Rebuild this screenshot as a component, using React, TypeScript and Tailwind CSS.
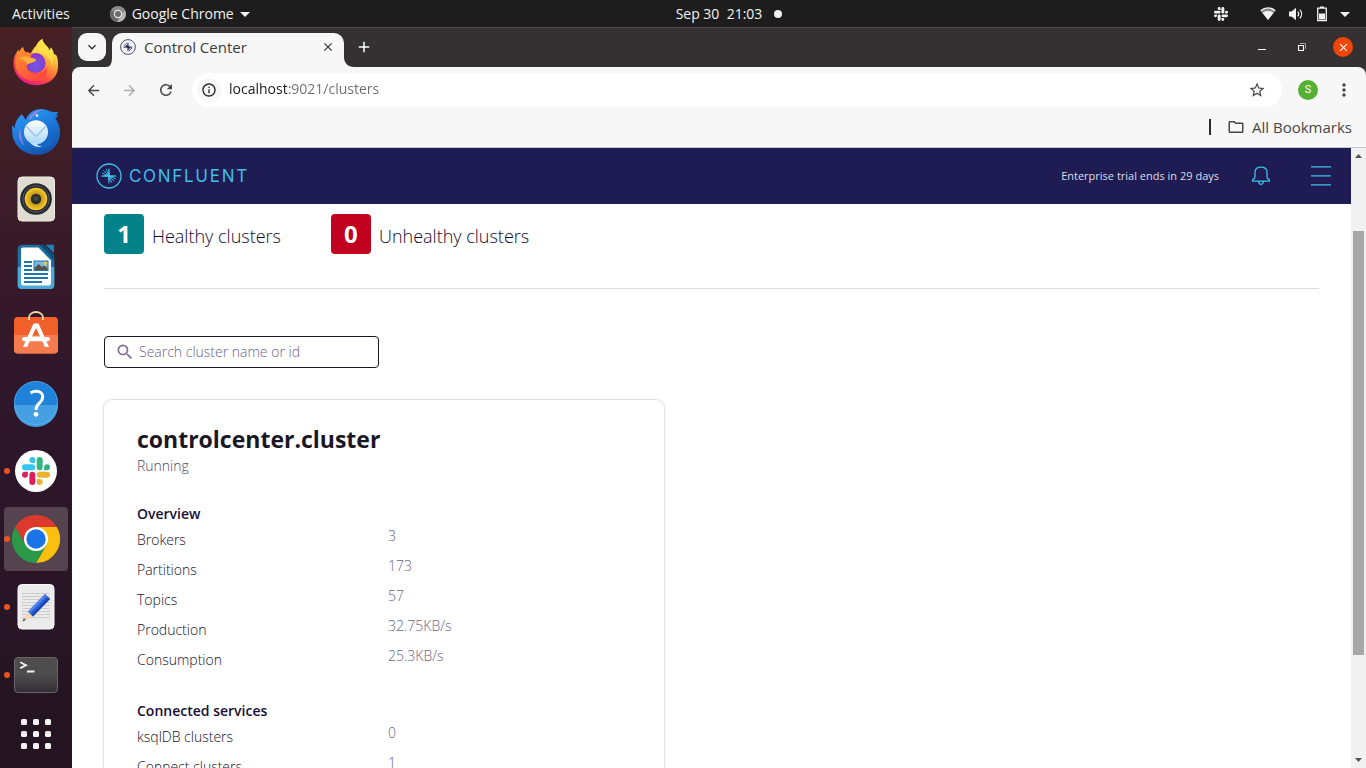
import type { ReactNode } from "react";
import {
  MdArrowBack,
  MdArrowForward,
  MdClose,
  MdInfoOutline,
  MdKeyboardArrowDown,
  MdMoreVert,
  MdRefresh,
  MdSearch,
  MdStarBorder,
  MdAdd,
  MdOutlineFolder,
} from "react-icons/md";

const SLACK_PATHS: { fill: string; d: string }[] = [
  {
    fill: "#e01e5a",
    d: "M5.042 15.165a2.528 2.528 0 0 1-2.52 2.523A2.528 2.528 0 0 1 0 15.165a2.527 2.527 0 0 1 2.522-2.52h2.52v2.52zM6.313 15.165a2.527 2.527 0 0 1 2.521-2.52 2.527 2.527 0 0 1 2.521 2.52v6.313A2.528 2.528 0 0 1 8.834 24a2.528 2.528 0 0 1-2.521-2.522v-6.313z",
  },
  {
    fill: "#36c5f0",
    d: "M8.834 5.042a2.528 2.528 0 0 1-2.521-2.52A2.528 2.528 0 0 1 8.834 0a2.528 2.528 0 0 1 2.521 2.522v2.52H8.834zM8.834 6.313a2.528 2.528 0 0 1 2.521 2.521 2.528 2.528 0 0 1-2.521 2.521H2.522A2.528 2.528 0 0 1 0 8.834a2.528 2.528 0 0 1 2.522-2.521h6.312z",
  },
  {
    fill: "#2eb67d",
    d: "M18.956 8.834a2.528 2.528 0 0 1 2.522-2.521A2.528 2.528 0 0 1 24 8.834a2.528 2.528 0 0 1-2.522 2.521h-2.522V8.834zM17.688 8.834a2.528 2.528 0 0 1-2.523 2.521 2.527 2.527 0 0 1-2.52-2.521V2.522A2.527 2.527 0 0 1 15.165 0a2.528 2.528 0 0 1 2.523 2.522v6.312z",
  },
  {
    fill: "#ecb22e",
    d: "M15.165 18.956a2.528 2.528 0 0 1 2.523 2.522A2.528 2.528 0 0 1 15.165 24a2.527 2.527 0 0 1-2.52-2.522v-2.522h2.52zM15.165 17.688a2.527 2.527 0 0 1-2.52-2.523 2.526 2.526 0 0 1 2.52-2.52h6.313A2.527 2.527 0 0 1 24 15.165a2.528 2.528 0 0 1-2.522 2.523h-6.313z",
  },
];

const APP_ICON = "size-12";

function FirefoxIcon() {
  return (
    <svg viewBox="0 0 48 48" className={APP_ICON} aria-hidden="true">
      <defs>
        <linearGradient id="ff-body" x1="0.8" y1="0.05" x2="0.3" y2="1">
          <stop offset="0.1" stopColor="#fff44f" />
          <stop offset="0.4" stopColor="#ffa436" />
          <stop offset="0.7" stopColor="#ff4f3e" />
          <stop offset="1" stopColor="#e31587" />
        </linearGradient>
        <radialGradient id="ff-globe" cx="0.5" cy="0.6" r="0.6">
          <stop offset="0" stopColor="#6a5be8" />
          <stop offset="1" stopColor="#9035c4" />
        </radialGradient>
        <linearGradient id="ff-fox" x1="0" y1="0" x2="0.6" y2="1">
          <stop offset="0" stopColor="#ff9a2b" />
          <stop offset="1" stopColor="#ff4a3f" />
        </linearGradient>
      </defs>
      <path
        fill="url(#ff-body)"
        d="M30.5 0c.2 3.600 3 5.700 5.600 8.500l1 3.300c.9-.7 1.500-2 1.500-3.500 2 2 3 4.200 3.200 6.600 1 .2 1.900.7 2.700 1.500 1.300 3 1.800 6.500 1.500 10.700C46.200 39 36.500 46.200 24.500 46.200 11.500 46.200 1.500 37 1.500 24c0-6 2.500-10 5.100-13.500l.5 3c.8-2.300 2-4.200 3.900-5.600.2 2.100 1 3.800 2.300 5.100 2 .1 3.800.6 5.500 1.500 1.200-3 2.900-5.500 5.200-7.500C25.200 4.300 27.500 1.500 30.500 0z"
      />
      <circle cx="23.600" cy="24" r="10" fill="url(#ff-globe)" />
      <path
        fill="url(#ff-fox)"
        d="M11 7.900c.2 2.100 1 3.800 2.300 5.100 2.500.1 4.700.8 6.500 2.300l-1.500 3.100c1.800.5 4 1 5.800 2.400-.7 2-2.600 2.500-4.600 3-2.400.6-4.700.9-4.700 4 0 4.500 4.700 7.200 9.500 7 5.200-.2 9-3.500 10.300-7.300C37 34.500 32 42 23 42 11 42 3.500 34 3.500 25c0-4 1-7.500 3.600-11.500.8-2.300 2-4.200 3.900-5.600z"
      />
      <path
        fill="#ffb13b"
        d="M7 19.500c4-2.600 8.600-2.600 11.300-1.100 1.800.5 4 1 5.800 2.400-.7 2-2.600 2.500-4.600 3-2 .6-3.500.9-4.300 2-1-3.500-4-5.600-8.200-6.300z"
      />
      <path
        fill="#ffe04a"
        opacity="0.75"
        d="M30.500 0c.2 3.600 3 5.700 5.600 8.500 4.500 6 6 12 4.400 19-1.500-7-5-10.500-9-12.500-3-1.700-7-2-11.500-1 1.500-3 2.400-4.500 4-6.500C25.200 4.300 27.500 1.500 30.500 0z"
      />
    </svg>
  );
}

function ThunderbirdIcon() {
  return (
    <svg viewBox="0 0 48 48" className={APP_ICON} aria-hidden="true">
      <defs>
        <linearGradient id="tb-body" x1="0.2" y1="0" x2="0.7" y2="1">
          <stop offset="0" stopColor="#2f9af5" />
          <stop offset="0.5" stopColor="#1b77d8" />
          <stop offset="1" stopColor="#1450a8" />
        </linearGradient>
        <linearGradient id="tb-mail" x1="0" y1="0" x2="0" y2="1">
          <stop offset="0" stopColor="#ffffff" />
          <stop offset="1" stopColor="#a9d6fb" />
        </linearGradient>
      </defs>
      <path
        fill="url(#tb-body)"
        d="M9.700 7.300c1.500 1.600 2.800 3.300 4 5.700 2-6.500 8-11 15.500-11 3.300 0 6.300.9 8.900 2.500 2.500.6 5.200.6 8.300.2-.6 1.600-1.500 2.700-2.700 3.300l2.500.4c-.8 1.500-1.700 2.300-3 2.800 3.200 4 4.800 8.800 4.800 14C48 38.500 38 47.800 25 47.800 11 47.800.6 38 .2 24.500L0 18.300c.9.800 1.700 1.700 2.300 2.900.7-5.500 3.200-10 7.400-13.900z"
      />
      <path
        fill="#8f86e8"
        d="M16.500 12.500C19 6 25 2.300 31 3c-4 1.200-6.500 2.500-7.800 4.900-1.300.2-2.200.8-2.600 2-.6 1.700-2.200 2.600-4.100 2.600z"
      />
      <path fill="#7e7fe0" d="M8.500 21c-3.500 6-2 13 4 17.500-3-6-4-11.500-4-17.500z" />
      <path fill="#1567c4" d="M31 36c6-1.500 9-5.500 9.500-11.500C43.500 32 40 40 30 42c-5 .8-9-.8-12-3z" />
      <circle cx="24" cy="25.300" r="12" fill="url(#tb-mail)" />
      <path fill="#c3dffc" d="M24 36c1.500 2 3.500 3.200 6 3.800-4.500 1-9-.4-12-4z" />
      <path fill="none" stroke="#9cc3ea" strokeWidth="1.500" d="M14.500 19.500l8 8.700c.9 1 2.100 1 3 0l8-8.700" />
      <circle cx="25" cy="8.600" r="1.300" fill="#e6f3ff" />
    </svg>
  );
}

function RhythmboxIcon() {
  return (
    <svg viewBox="0 0 48 48" className={APP_ICON} aria-hidden="true">
      <defs>
        <radialGradient id="rb-cone">
          <stop offset="0.3" stopColor="#b5860d" />
          <stop offset="1" stopColor="#f9cd2e" />
        </radialGradient>
      </defs>
      <rect x="6" y="2" width="36.500" height="44" rx="4" fill="#dfdbd1" stroke="#f1eee8" />
      <circle cx="24" cy="24" r="15.800" fill="#26262e" />
      <circle cx="24" cy="24" r="13.300" fill="none" stroke="#565766" strokeWidth="1" />
      <circle cx="24" cy="24" r="11.300" fill="url(#rb-cone)" />
      <circle cx="24" cy="24" r="5.200" fill="#2c2c2c" />
      <circle cx="24" cy="23.500" r="2.500" fill="#444" />
    </svg>
  );
}

function WriterIcon() {
  return (
    <svg viewBox="0 0 48 48" className={APP_ICON} aria-hidden="true">
      <path fill="#1c6f9f" d="M10 1.700h18L42.300 16v26a4 4 0 0 1-4 4H9.700a4 4 0 0 1-4-4V6a4.300 4.300 0 0 1 4.300-4.300z" />
      <path fill="#4aa9d8" d="M5.700 24h36.600v18a4 4 0 0 1-4 4H9.700a4 4 0 0 1-4-4z" />
      <path fill="#0d4f79" d="M28 1.700h4L42.300 12v6z" />
      <path fill="#1e81b4" d="M33.500 1.700H42v8.500z" />
      <path fill="#fff" d="M11 4.500h15.500L39 17.500V40a2.500 2.500 0 0 1-2.500 2.500h-25A2.500 2.500 0 0 1 9 40V6.500a2 2 0 0 1 2-2z" />
      <path
        stroke="#1d77ab"
        strokeWidth="1.900"
        d="M12 19h8M12 23h8M12 27h8M12 31h24M12 35h24M12 39h18"
      />
      <rect x="22" y="18" width="14" height="9.500" fill="#7db9e6" stroke="#1d77ab" />
      <path fill="#55534c" d="M22.500 27v-2l4-4 3.500 3 2-1.500 3.500 2.500v2z" />
      <circle cx="33.500" cy="20.500" r="1.800" fill="#f6c94b" />
    </svg>
  );
}

function SoftwareIcon() {
  return (
    <svg viewBox="0 0 48 48" className={APP_ICON} aria-hidden="true">
      <rect x="2" y="6" width="44" height="36.500" rx="4" fill="#f1602b" />
      <path fill="#f47c4f" d="M2 24h44v14.500a4 4 0 0 1-4 4H6a4 4 0 0 1-4-4z" />
      <path fill="none" stroke="#f3dba9" strokeWidth="1.800" d="M17 9V6.500a7 5.500 0 0 1 14 0V9" />
      <path fill="#fff" d="M21.500 12.500h5L37 36h-4.200l-3-7h-11.600l-3 7H11z M24 17l-4 8.500h8z" fillRule="evenodd" />
      <rect x="10" y="26" width="28" height="4.200" rx="2.100" fill="#fff" />
    </svg>
  );
}

function HelpIcon() {
  return (
    <svg viewBox="0 0 48 48" className={APP_ICON} aria-hidden="true">
      <circle cx="24" cy="24" r="22" fill="#1e83d8" />
      <path fill="#45a0e3" d="M2 26h44a22 22 0 0 1-44 0z" />
      <circle cx="24" cy="24" r="21.500" fill="none" stroke="#60b5ee" strokeOpacity="0.6" />
      <path
        fill="none"
        stroke="#fff"
        strokeWidth="3"
        d="M18.500 13.800c2-1 3.800-1.500 5.800-1.500 4 0 6.400 2.200 6.400 5.600 0 3-1.600 4.500-3.700 6.500-2 1.900-3 3.400-3 6.600"
      />
      <circle cx="24" cy="35.300" r="2.400" fill="#fff" />
    </svg>
  );
}

function SlackIcon() {
  return (
    <svg viewBox="0 0 48 48" className={APP_ICON} aria-hidden="true">
      <circle cx="24" cy="24" r="21" fill="#fff" />
      <g transform="translate(10 10) scale(1.167)">
        {SLACK_PATHS.map((p) => (
          <path key={p.fill} fill={p.fill} d={p.d} />
        ))}
      </g>
    </svg>
  );
}

function ChromeIcon() {
  return (
    <svg viewBox="0 0 48 48" className={APP_ICON} aria-hidden="true">
      <path fill="#dc3a2e" d="M3.200 12A24 24 0 0 1 44.800 12L24 12 13.600 30z" />
      <path fill="#fbc00f" d="M44.800 12A24 24 0 0 1 24 48L34.400 30 24 12z" />
      <path fill="#2a9a49" d="M24 48A24 24 0 0 1 3.200 12L13.600 30 34.400 30z" />
      <circle cx="24" cy="24" r="12" fill="#fff" />
      <circle cx="24" cy="24" r="9.700" fill="#1b73e8" />
    </svg>
  );
}

function EditorIcon() {
  return (
    <svg viewBox="0 0 48 48" className={APP_ICON} aria-hidden="true">
      <rect x="6" y="1.500" width="36" height="44.500" rx="4" fill="#ebebeb" stroke="#fafafa" />
      <path
        stroke="#cccccc"
        d="M10 10.500h28M10 13.500h28M10 16.500h28M10 19.500h28M10 22.500h28M10 25.500h28M10 28.500h28M10 31.500h28M10 34.500h28"
      />
      <path fill="#f6d4b5" d="M16 28.500l-5.500 9.500 10.500-4.500z" />
      <path fill="#4a4a4a" d="M12 35.300L10.300 38.500l3.500-1.500z" />
      <path fill="#2c5fd8" d="M16 28.500L33 11l5 5-17 17.500z" />
      <path fill="#4f83ee" d="M16 28.500L33 11l1.800 1.800-17 17.500z" />
      <path fill="#1d46b0" d="M19.300 31.800l17-17.500L38 16 21 33.500z" />
    </svg>
  );
}

function TerminalIcon() {
  return (
    <svg viewBox="0 0 48 48" className={APP_ICON} aria-hidden="true">
      <defs>
        <linearGradient id="term-bg" x1="0" y1="0" x2="0" y2="1">
          <stop offset="0.500" stopColor="#4d4d4d" />
          <stop offset="1" stopColor="#332c33" />
        </linearGradient>
      </defs>
      <rect x="2.500" y="6.500" width="43" height="35" rx="3.500" fill="url(#term-bg)" stroke="#68646a" />
      <path fill="none" stroke="#f5f5f5" strokeWidth="1.800" d="M8.300 11.300l5.700 2.900-5.700 2.900M15 20.500h7.500" />
    </svg>
  );
}

type DockApp = { name: string; icon: ReactNode; running?: boolean; active?: boolean };

const DOCK_APPS: DockApp[] = [
  { name: "Firefox", icon: <FirefoxIcon /> },
  { name: "Thunderbird", icon: <ThunderbirdIcon /> },
  { name: "Rhythmbox", icon: <RhythmboxIcon /> },
  { name: "LibreOffice Writer", icon: <WriterIcon /> },
  { name: "Software", icon: <SoftwareIcon /> },
  { name: "Help", icon: <HelpIcon /> },
  { name: "Slack", icon: <SlackIcon />, running: true },
  { name: "Chrome", icon: <ChromeIcon />, running: true, active: true },
  { name: "Text Editor", icon: <EditorIcon />, running: true },
  { name: "Terminal", icon: <TerminalIcon />, running: true },
];

function Dock() {
  return (
    <nav
      aria-label="Dock"
      className="flex w-[72px] shrink-0 flex-col overflow-hidden bg-linear-to-b from-[#472124] via-[#2f162b] to-[#231420] pt-0.5"
    >
      {DOCK_APPS.map((app) => (
        <div key={app.name} className="flex h-[68px] shrink-0 items-center justify-center">
          <button
            type="button"
            aria-label={app.name}
            className={
              app.active
                ? "relative flex size-16 items-center justify-center rounded bg-[#55434f]"
                : "relative flex size-16 items-center justify-center rounded"
            }
          >
            {app.icon}
            {app.running && <span className="absolute left-0 size-1.5 rounded-full bg-[#e95420]" />}
          </button>
        </div>
      ))}
      <button type="button" aria-label="Show Applications" className="flex h-[50px] shrink-0 items-center justify-center">
        <svg viewBox="0 0 30 30" className="size-[30px]" fill="#f4f2f0" aria-hidden="true">
          {[0, 12, 24].map((y) => [0, 12, 24].map((x) => <rect key={`${x}-${y}`} x={x} y={y} width="6" height="6" rx="1.500" />))}
        </svg>
      </button>
    </nav>
  );
}

function TopBar() {
  return (
    <header className="grid h-7 shrink-0 grid-cols-[1fr_auto_1fr] items-center bg-[#1d1d1d] px-3 text-sm text-[#f2f2f2]">
      <div className="flex items-center gap-10">
        <button type="button">Activities</button>
        <button type="button" className="flex items-center gap-1.5">
          <svg viewBox="0 0 16 16" className="size-4" aria-hidden="true">
            <circle cx="8" cy="8" r="8" fill="#8b8b8b" />
            <path fill="#6a6a6a" d="M1 4a8 8 0 0 0 6 12l3.500-6z" />
            <path fill="#b5b5b5" d="M15 4.500A8 8 0 0 1 7.500 16l4-7z" />
            <circle cx="8" cy="8" r="4.200" fill="#e8e8e8" />
            <circle cx="8" cy="8" r="3" fill="#6a6a6a" />
          </svg>
          <span>Google Chrome</span>
          <svg viewBox="0 0 10 5" className="w-2.5" fill="#f2f2f2" aria-hidden="true">
            <path d="M0 0h10L5 5z" />
          </svg>
        </button>
      </div>
      <button type="button" className="flex items-center gap-3 pl-23">
        <span className="whitespace-pre">Sep 30  21:03</span>
        <span className="size-2 rounded-full bg-[#f2f2f2]" />
      </button>
      <div className="flex items-center justify-end gap-3 pr-1">
        <svg viewBox="0 0 24 24" className="mr-5 size-3.5" fill="#f2f2f2" aria-label="Slack">
          {SLACK_PATHS.map((p) => (
            <path key={p.fill} d={p.d} />
          ))}
        </svg>
        <svg viewBox="0 0 16 14" className="w-4" aria-label="Wi-Fi">
          <path fill="#8a8a8a" d="M8 1C4.800 1 2.200 2 .3 3.500L8 13l7.700-9.500C13.800 2 11.200 1 8 1z" />
          <path fill="none" stroke="#f2f2f2" strokeWidth="1.400" d="M.8 3.700C5-.1 11-.1 15.200 3.700" />
          <path fill="#f2f2f2" d="M8 4c-2.200 0-4 .6-5.500 1.800L8 13l5.500-7.200C12 4.600 10.200 4 8 4z" />
        </svg>
        <svg viewBox="0 0 16 14" className="w-4" aria-label="Volume">
          <path fill="#f2f2f2" d="M1 4.500h2.500L8 .8v12.400L3.500 9.500H1z" />
          <path fill="none" stroke="#f2f2f2" strokeWidth="1.200" d="M9.800 4.600c1.200 1.500 1.200 3.300 0 4.800M11.800 2.600c2.400 2.600 2.400 6.200 0 8.800" />
        </svg>
        <svg viewBox="0 0 12 16" className="w-3" aria-label="Battery">
          <path fill="none" stroke="#f2f2f2" strokeWidth="1.300" d="M4 1.200h4M1.700 2.200h8.600v12.500H1.700z" />
          <path fill="#f2f2f2" d="M3 7.500h6v6H3z" />
        </svg>
        <svg viewBox="0 0 10 5" className="w-2.5" fill="#f2f2f2" aria-hidden="true">
          <path d="M0 0h10L5 5z" />
        </svg>
      </div>
    </header>
  );
}

function ConfluentMark({ className }: { className: string }) {
  return (
    <svg viewBox="0 0 26 26" className={className} fill="none" stroke="currentColor" aria-hidden="true">
      <circle cx="13" cy="13" r="12" strokeWidth="1.300" />
      <path
        strokeWidth="0.900"
        d="M13 13V5.500M13 13L10.200 5.800M13 13L7.300 7.500M13 13L5.800 10M13 13H5.200M13 13v7.500M13 13l3 7M13 13l5.300 5.300M13 13l7 3M13 13h7.500"
      />
      <path fill="currentColor" stroke="none" d="M5.200 13.300L12 11.300 13 5.500l1 6.800 6.700.7-6.700 1.500-1 6-1-6.500z" />
    </svg>
  );
}

function TitleBar() {
  return (
    <div className="flex h-10 shrink-0 items-end border-t border-[#4a4848] bg-[#353132] pl-1.5">
      <button
        type="button"
        aria-label="Search tabs"
        className="mb-1.5 flex size-7 items-center justify-center rounded-[9px] bg-[#f7f7f7] text-[#333]"
      >
        <MdKeyboardArrowDown size={16} />
      </button>
      <div className="flex h-[34px] items-start">
        <svg viewBox="0 0 6 10" className="w-1.5 self-end" fill="#f7f7f7" aria-hidden="true">
          <path d="M6 0v10H0c4 0 6-3 6-10z" />
        </svg>
        <div className="flex h-full w-[232px] items-center rounded-t-[10px] bg-[#f7f7f7] pr-2 pb-1.5 pl-2 text-[#1e1c52]">
          <ConfluentMark className="size-4" />
          <span className="ml-2 flex-1 text-[15px] leading-5 text-[#3c3c3c]">Control Center</span>
          <button type="button" aria-label="Close tab" className="flex size-4 items-center justify-center text-[#333]">
            <MdClose size={14} />
          </button>
        </div>
        <svg viewBox="0 0 10 10" className="w-2.5 self-end" fill="#f7f7f7" aria-hidden="true">
          <path d="M0 0v10h10C4 10 0 6 0 0z" />
        </svg>
      </div>
      <button type="button" aria-label="New tab" className="mb-[11px] ml-px text-white">
        <MdAdd size={18} />
      </button>
      <div className="ml-auto flex items-center gap-6 pr-[13px] pb-2.5 text-white">
        <button type="button" aria-label="Minimize" className="flex size-4 items-center justify-center">
          <svg viewBox="0 0 16 16" className="size-4" aria-hidden="true">
            <path stroke="currentColor" d="M5 10.500h8" />
          </svg>
        </button>
        <button type="button" aria-label="Restore" className="flex size-4 items-center justify-center">
          <svg viewBox="0 0 16 16" className="size-4" fill="none" stroke="currentColor" aria-hidden="true">
            <rect x="5.500" y="6.500" width="5" height="5" />
            <path stroke="#a3a1a1" d="M7 4.500h5.500V10" />
          </svg>
        </button>
        <button type="button" aria-label="Close" className="flex size-5 items-center justify-center rounded-full bg-[#ef4505]">
          <MdClose size={13} />
        </button>
      </div>
    </div>
  );
}

function BrowserToolbar() {
  return (
    <div className="bg-[#353132]">
      <div className="rounded-t-lg border-b border-[#c6c6c6] bg-[#f7f7f7] text-[#474747]">
        <div className="flex items-center gap-4 px-[13px] pt-1.5">
          <button type="button" aria-label="Back">
            <MdArrowBack size={17} />
          </button>
          <button type="button" aria-label="Forward" className="ml-[3px] text-[#ababab]">
            <MdArrowForward size={17} />
          </button>
          <button type="button" aria-label="Reload" className="ml-[3px]">
            <MdRefresh size={18} />
          </button>
          <div className="ml-px flex h-[34px] flex-1 items-center rounded-full bg-white pr-4 pl-[5px]">
            <button
              type="button"
              aria-label="Site information"
              className="flex size-6 items-center justify-center rounded-full bg-[#f7f7f7] text-[#222]"
            >
              <MdInfoOutline size={16} />
            </button>
            <input
              aria-label="Address"
              defaultValue="localhost:9021/clusters"
              className="ml-2 min-w-0 flex-1 bg-[linear-gradient(90deg,#1a1a1a_58px,#6e6e6e_58px)] bg-clip-text pb-0.5 text-sm text-transparent caret-black outline-none"
            />
            <button type="button" aria-label="Bookmark this page">
              <MdStarBorder size={18} />
            </button>
          </div>
          <button
            type="button"
            aria-label="Profile"
            className="flex size-5 items-center justify-center rounded-full bg-[#55b033] font-['Roboto',sans-serif] text-[11px] text-white"
          >
            S
          </button>
          <button type="button" aria-label="Menu" className="-mr-px">
            <MdMoreVert size={20} />
          </button>
        </div>
        <div className="flex h-10 items-center justify-end gap-4 pr-3.5">
          <span className="h-4 w-0.5 bg-[#2b2b2b]" />
          <button type="button" className="flex items-center gap-[7px] text-[15px] leading-5">
            <MdOutlineFolder size={18} />
            All Bookmarks
          </button>
        </div>
      </div>
    </div>
  );
}

function AppHeader() {
  return (
    <header className="flex h-14 shrink-0 items-center bg-[#1e1c52] pr-5 pl-6">
      <a href="#home" className="flex items-center gap-[7px] text-[#40bfe8]">
        <ConfluentMark className="size-[26px]" />
        <span className="pt-0.5 font-['Inter',sans-serif] text-[17px] font-normal tracking-widest">CONFLUENT</span>
      </a>
      <span className="ml-auto text-[11px] text-[#dcdce8]">Enterprise trial ends in 29 days</span>
      <button type="button" aria-label="Notifications" className="ml-8 text-[#40bfe8]">
        <svg viewBox="0 0 20 20" className="size-5" fill="none" stroke="currentColor" strokeWidth="1.300" aria-hidden="true">
          <path d="M1.700 15.200v-1.600c1.600-.6 2.300-1.400 2.300-2.800V6.500C4 3.500 6 1.200 10 1.200s6 2.300 6 5.300v4.300c0 1.400.7 2.200 2.300 2.800v1.600zM7.600 15.500c.2 1.900 1 2.900 2.400 2.900s2.200-1 2.400-2.900" />
        </svg>
      </button>
      <button type="button" aria-label="Main menu" className="ml-10 text-[#40bfe8]">
        <svg viewBox="0 0 20 20" className="size-5" stroke="currentColor" strokeWidth="1.300" aria-hidden="true">
          <path d="M0 .8h20M0 9.800h20M0 18.800h20" />
        </svg>
      </button>
    </header>
  );
}

type Stat = { label: string; value: string };

const OVERVIEW: Stat[] = [
  { label: "Brokers", value: "3" },
  { label: "Partitions", value: "173" },
  { label: "Topics", value: "57" },
  { label: "Production", value: "32.75KB/s" },
  { label: "Consumption", value: "25.3KB/s" },
];

const SERVICES: Stat[] = [
  { label: "ksqlDB clusters", value: "0" },
  { label: "Connect clusters", value: "1" },
];

function StatSection({ title, stats }: { title: string; stats: Stat[] }) {
  return (
    <section className="mt-[27px]">
      <h3 className="text-sm leading-5 font-semibold text-[#170f36]">{title}</h3>
      <dl>
        {stats.map((s) => (
          <div key={s.label} className="grid h-[30px] grid-cols-2 gap-x-2 text-sm leading-6 font-light">
            <dt className="pt-1 text-[#14102a]">{s.label}</dt>
            <dd className="text-[#6c6288]">{s.value}</dd>
          </div>
        ))}
      </dl>
    </section>
  );
}

function HealthCount({ count, label, tone }: { count: number; label: string; tone: string }) {
  return (
    <div className="flex items-center gap-2">
      <span className={`flex size-10 items-center justify-center rounded text-2xl font-bold text-white ${tone}`}>{count}</span>
      <span className="pt-1 text-lg font-light text-[#120a2b]">{label}</span>
    </div>
  );
}

function Scrollbar() {
  return (
    <div className="flex w-[15px] shrink-0 flex-col items-center bg-[#f1f1f1]" aria-hidden="true">
      <svg viewBox="0 0 15 17" className="w-[15px]" fill="#505050">
        <path d="M4 10l3.500-4 3.500 4z" />
      </svg>
      <div className="flex-[66]" />
      <div className="w-[11px] flex-[424] bg-[#a8a8a8]" />
      <div className="flex-[96]" />
      <svg viewBox="0 0 15 17" className="w-[15px]" fill="#505050">
        <path d="M4 7l3.500 4L11 7z" />
      </svg>
    </div>
  );
}

export default function App() {
  return (
    <div className="flex h-screen flex-col overflow-hidden bg-white font-['Open_Sans','Noto_Sans',sans-serif]">
      <TopBar />
      <div className="-mt-px flex min-h-0 flex-1">
        <Dock />
        <div className="flex min-w-0 flex-1 flex-col">
          <TitleBar />
          <BrowserToolbar />
          <div className="flex min-h-0 flex-1">
            <div className="flex min-w-0 flex-1 flex-col overflow-hidden">
              <AppHeader />
              <main className="min-h-0 flex-1 px-8 pt-2.5">
                <div className="flex gap-[50px] border-b border-[#dcdce6] pb-[34px]">
                  <HealthCount count={1} label="Healthy clusters" tone="bg-[#04828a]" />
                  <HealthCount count={0} label="Unhealthy clusters" tone="bg-[#c2001f]" />
                </div>
                <label className="mt-[47px] flex h-8 w-[275px] items-center rounded border border-[#1a1626] px-2.5">
                  <MdSearch size={20} className="text-[#7d6f95]" />
                  <input
                    type="search"
                    aria-label="Search clusters"
                    placeholder="Search cluster name or id"
                    className="ml-1 min-w-0 flex-1 text-sm font-light outline-none placeholder:text-[#6c6288]"
                  />
                </label>
                <article className="mt-8 max-w-[560px] rounded-lg px-[33px] pt-[23px] pb-8 shadow-[0_0_0_1px_#e2e2e6,0_1px_3px_rgba(0,0,0,0.12)]">
                  <h2 className="text-[23px] leading-8 font-bold text-[#191724]">controlcenter.cluster</h2>
                  <p className="text-sm leading-[22px] font-light text-[#4a4462]">Running</p>
                  <StatSection title="Overview" stats={OVERVIEW} />
                  <StatSection title="Connected services" stats={SERVICES} />
                </article>
              </main>
            </div>
            <Scrollbar />
          </div>
        </div>
      </div>
    </div>
  );
}
